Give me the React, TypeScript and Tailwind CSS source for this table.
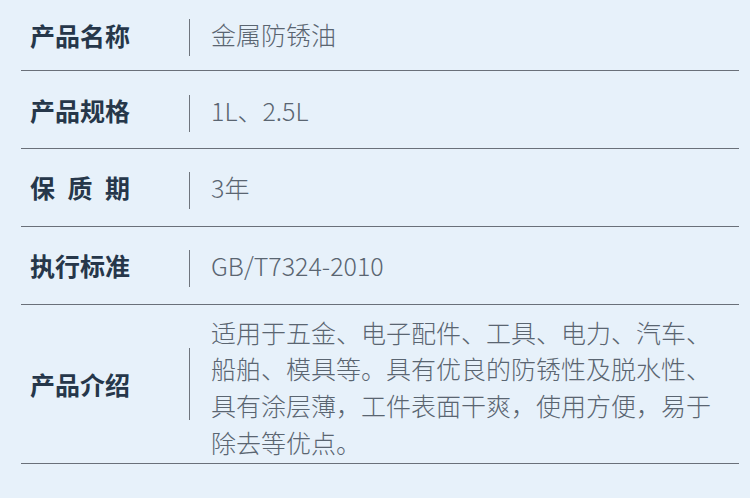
import React from "react";

const font = { fontFamily: '"Noto Sans CJK SC", "Noto Sans", sans-serif' };

function Row({
  label,
  value,
  h,
  pt,
  divH,
  tpb,
  spaced,
}: {
  label: string;
  value: React.ReactNode;
  h: string;
  pt: string;
  divH: string;
  tpb: string;
  spaced?: boolean;
}) {
  return (
    <div className={`flex items-center border-b border-[#6a7079] ${h} ${pt}`}>
      <div className={`w-[168px] pl-[9px] shrink-0 ${tpb}`}>
        {spaced ? (
          <div className="flex w-[100px] justify-between text-[25px] font-bold leading-none text-[#26374a]">
            {label.split("").map((c, i) => (
              <span key={i}>{c}</span>
            ))}
          </div>
        ) : (
          <div className="text-[25px] font-bold leading-none text-[#26374a]">{label}</div>
        )}
      </div>
      <div className={`w-px bg-[#6f757d] shrink-0 ${divH}`} />
      <div className={`ml-[21px] text-[25px] font-light text-[#5a6571] ${tpb}`}>{value}</div>
    </div>
  );
}

export default function App() {
  return (
    <div className="w-[750px] h-[498px] bg-[#e7f1fa] pl-[21px] pr-[11px]" style={font}>
      <Row label="产品名称" value={<span className="leading-none">金属防锈油</span>} h="h-[71px]" pt="pt-[5px]" divH="h-[37px]" tpb="pb-[5px]" />
      <Row label="产品规格" value={<span className="leading-none">1L、2.5L</span>} h="h-[78px]" pt="pt-[7px]" divH="h-[37px]" tpb="pb-[5px]" />
      <Row label="保质期" spaced value={<span className="leading-none">3年</span>} h="h-[78px]" pt="pt-[5px]" divH="h-[37px]" tpb="pb-[5px]" />
      <Row label="执行标准" value={<span className="leading-none">GB/T7324-2010</span>} h="h-[78px]" pt="pt-[5px]" divH="h-[37px]" tpb="pb-[5px]" />
      <Row
        label="产品介绍"
        value={
          <p className="w-[505px] pt-[6px] leading-[36.7px]">
            适用于五金、电子配件、工具、电力、汽车、船舶、模具等。具有优良的防锈性及脱水性、具有涂层薄，工件表面干爽，使用方便，易于除去等优点。
          </p>
        }
        h="h-[159px]"
        pt="pt-0"
        divH="h-[72px]"
        tpb="pb-0"
      />
    </div>
  );
}
